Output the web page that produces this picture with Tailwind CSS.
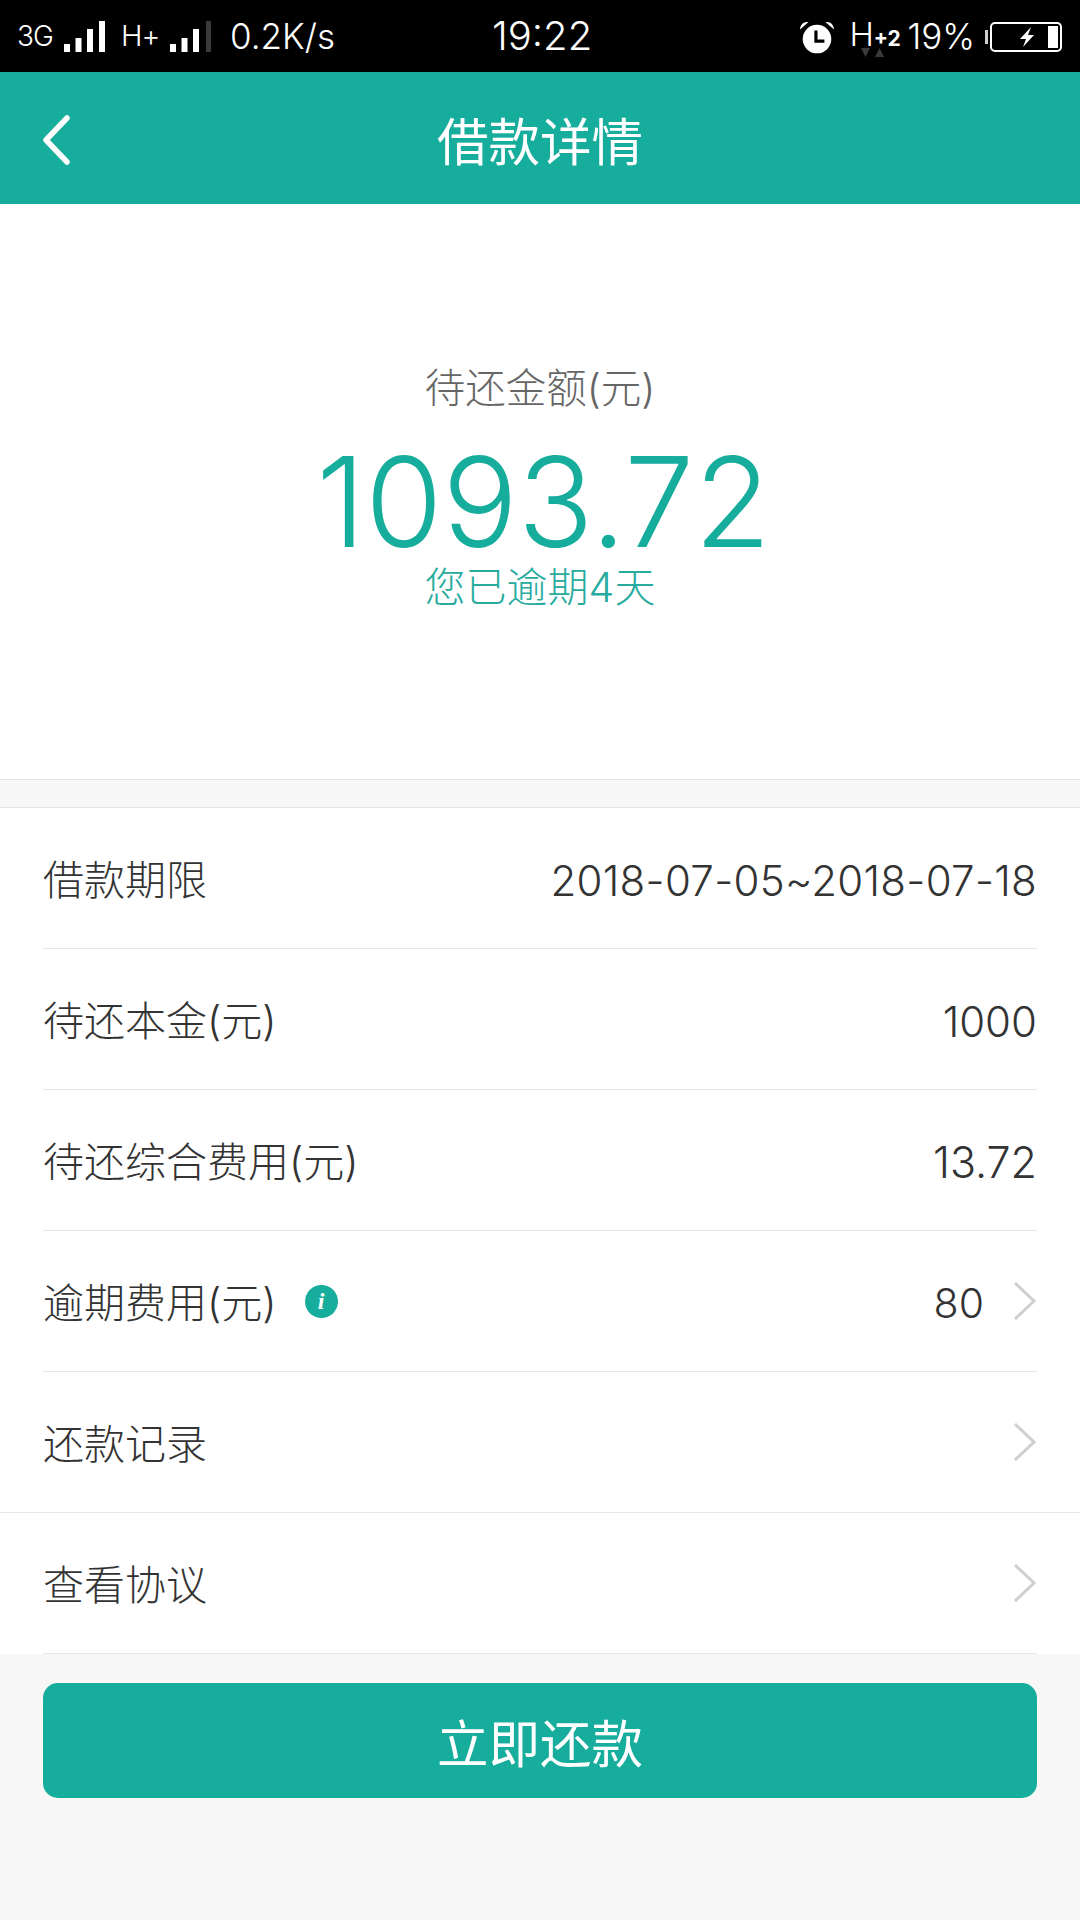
<!DOCTYPE html>
<html lang="zh">
<head>
    <meta charset="UTF-8">
    <title>借款详情</title>
    <script src="https://cdn.jsdelivr.net/npm/@tailwindcss/browser@4"></script>
</head>
<body class="bg-[#f7f7f7] font-['Inter','Noto_Sans_CJK_SC',sans-serif]">
<div class="w-[1080px] h-[1920px] flex flex-col overflow-hidden">
    <!-- status bar -->
    <div class="h-[72px] bg-black text-white flex items-center pl-[17px] pr-[18px]">
        <span class="w-[36px] text-[28px] tracking-[-1px] font-light">3G</span>
        <svg class="ml-[11px] mt-[1px]" width="41" height="32" viewBox="0 0 41 32" fill="#fff"><rect x="0" y="23" width="6" height="8"/><rect x="11.500" y="17" width="6" height="14"/><rect x="23" y="8" width="6" height="23"/><rect x="35" y="0" width="6" height="31"/></svg>
        <span class="ml-[16px] w-[36px] text-[29px] tracking-[-1px] font-light">H+</span>
        <svg class="ml-[13px] mt-[1px]" width="41" height="32" viewBox="0 0 41 32" fill="#fff"><rect x="0" y="23" width="6" height="8"/><rect x="11.500" y="17" width="6" height="14"/><rect x="23" y="8" width="6" height="23"/><rect x="36" y="0" width="5" height="31" fill="#3a3a3a"/></svg>
        <span class="ml-[19px] text-[35px] font-light">0.2K/s</span>
        <span class="ml-[157px] text-[40px] font-light">19:22</span>
        <svg class="ml-auto mt-[4px]" width="36" height="36" viewBox="0 0 34 34" fill="#fff"><circle cx="17" cy="18" r="13.500"/><path d="M1 9c0-5 4-8 8-7z M33 9c0-5-4-8-8-7z"/><path d="M16 10v10h8" fill="none" stroke="#000" stroke-width="3"/></svg>
        <div class="relative ml-[14px] -mt-[4px] w-[46px] flex items-baseline">
            <span class="text-[33px] font-light leading-none">H</span><span class="text-[21px] font-bold leading-none">+2</span>
            <svg class="absolute left-[12px] top-[30px]" width="23" height="10" viewBox="0 0 23 10" fill="#3a3a3a"><path d="M0 0h9l-4.500 9z M14 9h9l-4.500-9z"/></svg>
        </div>
        <span class="ml-[12px] text-[35px] font-light">19%</span>
        <svg class="ml-[10px] mt-[2px]" width="77" height="30" viewBox="0 0 77 30" fill="none"><rect x="0" y="8" width="3" height="14" fill="#cfcfcf"/><rect x="6" y="1" width="70" height="28" rx="4" stroke="#fff" stroke-width="2"/><rect x="63" y="4" width="10" height="22" fill="#fff"/><path d="M46 5L35 17h6l-3 8 11-12h-6z" fill="#fff"/></svg>
    </div>
    <!-- title bar -->
    <div class="h-[132px] bg-[#17ad9d] flex items-center relative">
        <svg class="ml-[43px] mt-[3px]" width="28" height="50" viewBox="0 0 28 50" fill="none"><path d="M24 3L3 25l21 22" stroke="#fff" stroke-width="5.500" stroke-linecap="round" stroke-linejoin="round"/></svg>
        <div class="absolute inset-0 flex items-center justify-center pt-[10px] text-white text-[51.500px]">借款详情</div>
    </div>
    <!-- amount -->
    <div class="h-[576px] bg-white border-b border-[#e4e4e4] flex flex-col items-center pt-[160px]">
        <div class="text-[#666] text-[40.500px] leading-[50px] font-light">待还金额(元)</div>
        <div class="text-[#17ad9d] text-[125px] leading-[100px] mt-[38px] pl-[7px] font-light">1093.72</div>
        <div class="text-[#26ab9e] text-[41px] leading-[50px] mt-[10px] font-light">您已逾期4天</div>
    </div>
    <!-- rows -->
    <div class="mt-[27px] bg-white border-t border-[#e4e4e4] text-[#333] text-[41px] font-light">
        <div class="mx-[43px] h-[141px] flex items-center justify-between border-b border-[#e6e6e6]"><span class="pt-[5px]">借款期限</span><span class="pt-[5px] text-[42px] tracking-[0.3px]">2018-07-05~2018-07-18</span></div>
        <div class="mx-[43px] h-[141px] flex items-center justify-between border-b border-[#e6e6e6]"><span class="pt-[5px]">待还本金(元)</span><span class="pt-[5px] text-[42px]">1000</span></div>
        <div class="mx-[43px] h-[141px] flex items-center justify-between border-b border-[#e6e6e6]"><span class="pt-[5px]">待还综合费用(元)</span><span class="pt-[5px] text-[43px]">13.72</span></div>
        <div class="mx-[43px] h-[141px] flex items-center justify-between border-b border-[#e6e6e6]">
            <div class="flex items-center"><span class="pt-[5px]">逾期费用(元)</span>
                <span class="ml-[28px] w-[33px] h-[33px] rounded-full bg-[#17ad9d] text-white text-[24px] font-bold italic flex items-center justify-center font-['Liberation_Serif',serif]">i</span></div>
            <div class="flex items-center"><span class="pt-[5px]">80</span>
                <svg class="ml-[29px]" width="24" height="38" viewBox="0 0 24 38" fill="none"><path d="M2 1l19 18L2 37" stroke="#cfcfcf" stroke-width="3"/></svg></div>
        </div>
        <div class="px-[43px] h-[141px] flex items-center justify-between border-b border-[#e6e6e6]"><span class="pt-[5px]">还款记录</span>
            <svg width="24" height="38" viewBox="0 0 24 38" fill="none"><path d="M2 1l19 18L2 37" stroke="#cfcfcf" stroke-width="3"/></svg></div>
        <div class="mx-[43px] h-[141px] flex items-center justify-between border-b border-[#e6e6e6]"><span class="pt-[5px]">查看协议</span>
            <svg width="24" height="38" viewBox="0 0 24 38" fill="none"><path d="M2 1l19 18L2 37" stroke="#cfcfcf" stroke-width="3"/></svg></div>
    </div>
    <!-- button -->
    <div class="mt-[29px] mx-[43px] h-[115px] rounded-[15px] bg-[#17ad9d] text-white text-[51.500px] pt-[9px] flex items-center justify-center">立即还款</div>
</div>
</body>
</html>
